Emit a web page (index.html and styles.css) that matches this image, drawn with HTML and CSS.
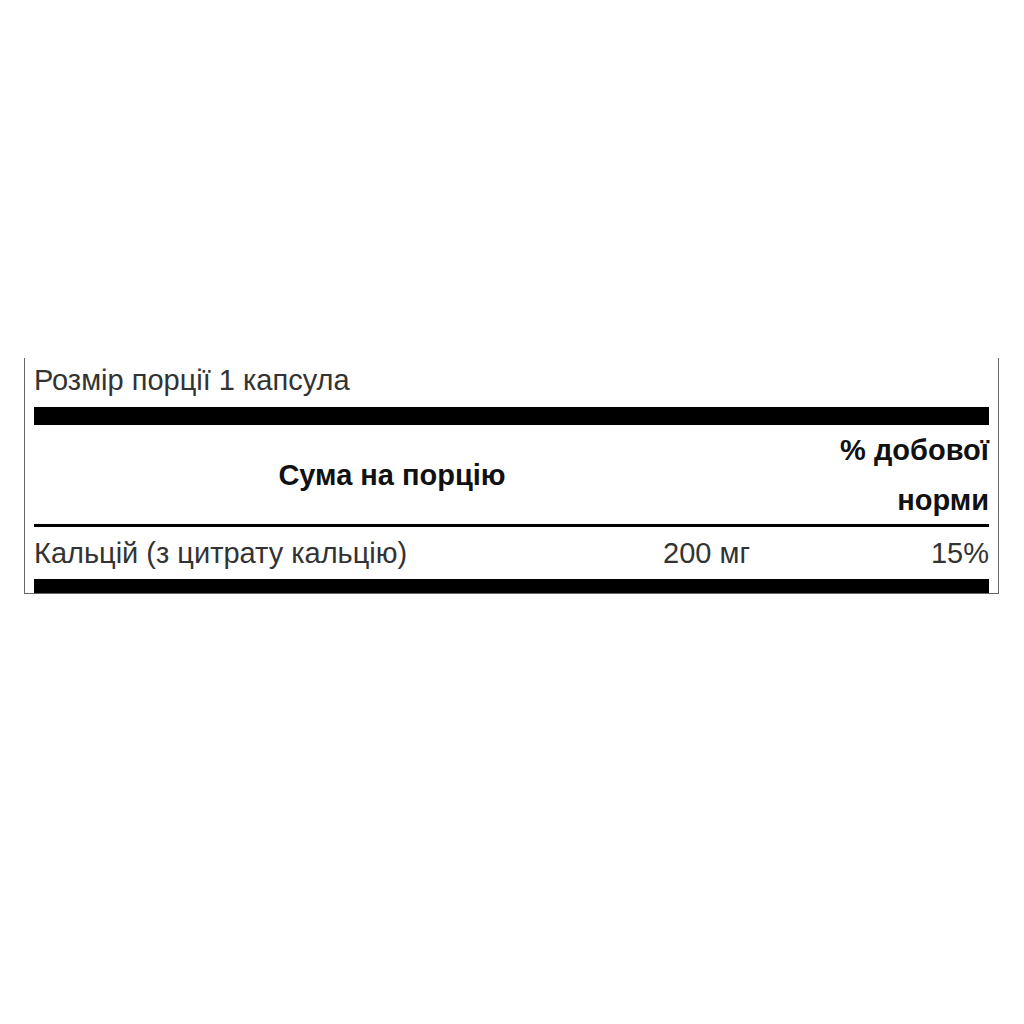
FILE: index.html
```html
<!DOCTYPE html>
<html lang="uk">
<head>
<meta charset="utf-8">
<title>Факти про добавку</title>
<link rel="stylesheet" href="styles.css">
</head>
<body>
<div class="panel">
  <div class="serving">Розмір порції 1 капсула</div>
  <div class="bar bar-top"></div>
  <div class="facts">
    <div class="head-amount">Сума на порцію</div>
    <div class="head-dv">% добової<br>норми</div>
    <div class="cell name">Кальцій (з цитрату кальцію)</div>
    <div class="cell amount">200 мг</div>
    <div class="cell dv">15%</div>
  </div>
  <div class="bar bar-bottom"></div>
</div>
</body>
</html>
```

FILE: styles.css
```css
html, body {
  margin: 0;
  padding: 0;
  background: #fff;
}

body {
  font-family: "Liberation Sans", Arial, sans-serif;
  color: #333;
}

.panel {
  margin: 358px 0 0 24px;
  width: 955px;
  padding: 0 9px;
  border-left: 1px solid #666;
  border-right: 1px solid #666;
  border-bottom: 1px solid #666;
}

.serving {
  font-size: 29px;
  line-height: 30px;
  padding-top: 7px;
  padding-bottom: 12px;
}

.bar {
  background: #000;
}

.bar-top {
  height: 18px;
}

.bar-bottom {
  height: 14px;
}

.facts {
  display: grid;
  grid-template-columns: 1fr auto 239px;
  font-size: 29px;
}

.head-amount {
  grid-column: 1 / 3;
  display: flex;
  align-items: center;
  justify-content: center;
  font-weight: bold;
  color: #111;
  line-height: 50px;
  border-bottom: 3px solid #000;
  height: 99px;
}

.head-dv {
  text-align: right;
  font-weight: bold;
  color: #111;
  line-height: 50px;
  padding-top: 0;
  border-bottom: 3px solid #000;
  height: 99px;
}

.cell {
  line-height: 52px;
}

.amount,
.dv {
  text-align: right;
}
```
